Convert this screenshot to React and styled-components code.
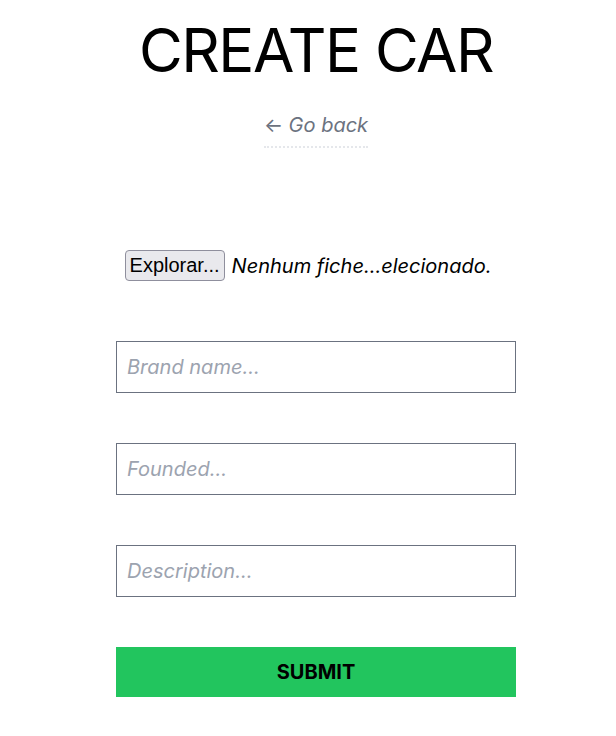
import React from "react";
import styled, { createGlobalStyle } from "styled-components";

const GlobalStyle = createGlobalStyle`
  body {
    margin: 0;
    background: #ffffff;
    font-family: Inter, "Noto Sans", sans-serif;
  }
`;

const CreateCar = () => {
  return (
    <Page>
      <GlobalStyle />
      <Title>CREATE CAR</Title>
      <BackLink href="#">
        <span>&larr;</span> Go back
      </BackLink>
      <Form onSubmit={(e) => e.preventDefault()}>
        <FileRow>
          <FileButton type="button">Explorar...</FileButton>
          <FileName>Nenhum fiche...elecionado.</FileName>
        </FileRow>
        <Field type="text" placeholder="Brand name..." />
        <Field type="text" placeholder="Founded..." />
        <Field type="text" placeholder="Description..." />
        <Submit type="submit">SUBMIT</Submit>
      </Form>
    </Page>
  );
};

export default CreateCar;

const Page = styled.div`
  display: flex;
  flex-direction: column;
  align-items: center;
  padding: 20px 0 40px 16px;
`;

const Title = styled.h1`
  margin: 0;
  font-size: 60px;
  line-height: 1;
  font-weight: 400;
  letter-spacing: -0.025em;
  color: #000;
`;

const BackLink = styled.a`
  margin-top: 31px;
  display: inline-block;
  font-size: 20px;
  line-height: 28px;
  font-style: italic;
  color: #6b7280;
  text-decoration: none;
  padding-bottom: 7px;
  border-bottom: 2px dotted #e5e7eb;

  > span {
    font-style: normal;
  }
`;

const Form = styled.form`
  width: 400px;
  margin-top: 102px;
  display: flex;
  flex-direction: column;
  gap: 50px;
`;

const FileRow = styled.div`
  display: flex;
  align-items: center;
  justify-content: center;
  gap: 7px;
  margin-bottom: 10px;
  padding-right: 16px;
`;

const FileButton = styled.button`
  font-family: "Liberation Sans", Arial, sans-serif;
  font-size: 20px;
  color: #000;
  height: 31px;
  padding: 0 4px;
  background: #e9e9ed;
  border: 1px solid #8f8f9d;
  border-radius: 4px;
`;

const FileName = styled.span`
  font-size: 20px;
  font-style: italic;
  color: #000;
`;

const Field = styled.input`
  box-sizing: border-box;
  width: 100%;
  height: 52px;
  padding: 0 10px;
  font-family: Inter, sans-serif;
  font-size: 20px;
  border: 1px solid #6b7280;
  outline: none;

  &::placeholder {
    color: #9ca3af;
    font-style: italic;
    opacity: 1;
  }
`;

const Submit = styled.button`
  height: 50px;
  border: 0;
  background: #22c55e;
  color: #000;
  font-family: Inter, sans-serif;
  font-weight: 700;
  font-size: 20px;
  cursor: pointer;
`;
